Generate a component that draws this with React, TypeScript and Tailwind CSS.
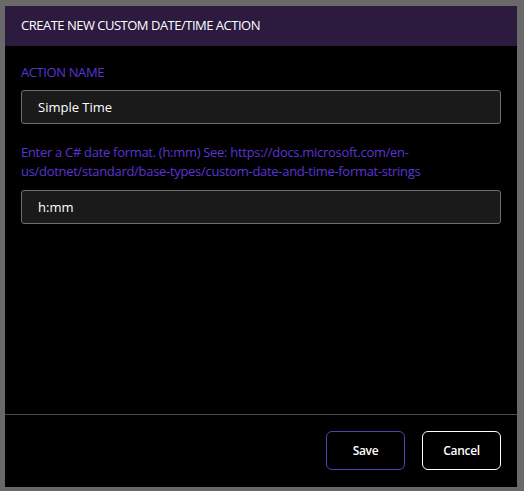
import React from "react";

const font = { fontFamily: '"Open Sans", "Noto Sans", sans-serif' };

export default function App() {
  return (
    <div
      className="w-[524px] h-[491px] bg-[#696969] pt-[6px] pl-[5px]"
      style={font}
    >
      <div className="w-[512px] h-[481px] bg-black flex flex-col">
        {/* Header */}
        <div className="h-[40px] bg-[#2d1a3f] flex items-center px-4">
          <h2 className="text-white text-[13px] tracking-[-0.5px]">
            CREATE NEW CUSTOM DATE/TIME ACTION
          </h2>
        </div>

        {/* Body */}
        <div className="flex-1 px-4 pt-[18px]">
          <label className="block text-[#5a34d4] text-[13px] leading-[16px] tracking-[-0.4px] mb-[10px]">
            ACTION NAME
          </label>
          <input
            defaultValue="Simple Time"
            className="w-[480px] h-[34px] bg-[#1a1a1a] border border-[#6e6e6e] rounded-[3px] px-4 text-white text-[13px] outline-none"
          />
          <p className="mt-[19px] text-[#5a34d4] text-[13px] leading-[19px] tracking-[-0.3px]">
            Enter a C# date format. (h:mm) See: https://docs.microsoft.com/en-
            us/dotnet/standard/base-types/custom-date-and-time-format-strings
          </p>
          <input
            defaultValue="h:mm"
            className="mt-[9px] w-[480px] h-[34px] bg-[#1a1a1a] border border-[#6e6e6e] rounded-[3px] px-4 text-white text-[13px] outline-none"
          />
        </div>

        {/* Footer */}
        <div className="h-[73px] border-t border-[#4a4a4a] flex items-start justify-end gap-[17px] pr-[16px] pt-[16px]">
          <button className="w-[79px] h-[39px] rounded-[6px] border border-[#5c3cb8] text-white text-[12px] font-semibold tracking-[-0.3px]">
            Save
          </button>
          <button className="w-[79px] h-[39px] rounded-[6px] border border-white text-white text-[12px] font-semibold tracking-[-0.3px]">
            Cancel
          </button>
        </div>
      </div>
    </div>
  );
}
